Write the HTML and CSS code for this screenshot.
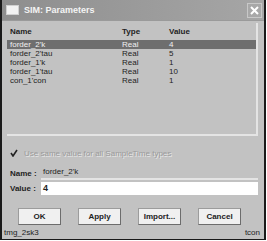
FILE: index.html
```html
<!DOCTYPE html>
<html lang="en">
<head>
  <meta charset="UTF-8" />
  <title>SIM: Parameters</title>
  <link rel="stylesheet" href="styles.css">
</head>
<body>
  <div class="window">
    <div class="titlebar">
      <span class="app-icon"></span>
      <span class="title">SIM: Parameters</span>
      <span class="close">
        <svg width="11" height="11" viewBox="0 0 11 11"><path d="M2 2 L9 9 M9 2 L2 9" stroke="#fff" stroke-width="2"/></svg>
      </span>
    </div>

    <div class="list">
      <div class="row head">
        <span class="c-name">Name</span><span class="c-type">Type</span><span class="c-val">Value</span>
      </div>
      <div class="row selected">
        <span class="c-name">forder_2'k</span><span class="c-type">Real</span><span class="c-val">4</span>
      </div>
      <div class="row">
        <span class="c-name">forder_2'tau</span><span class="c-type">Real</span><span class="c-val">5</span>
      </div>
      <div class="row">
        <span class="c-name">forder_1'k</span><span class="c-type">Real</span><span class="c-val">1</span>
      </div>
      <div class="row">
        <span class="c-name">forder_1'tau</span><span class="c-type">Real</span><span class="c-val">10</span>
      </div>
      <div class="row">
        <span class="c-name">con_1'con</span><span class="c-type">Real</span><span class="c-val">1</span>
      </div>
    </div>

    <div class="check">
      <span class="box">
        <svg width="8" height="8" viewBox="0 0 8 8"><path d="M1 4 L3 7 L7 1" stroke="#222" stroke-width="1.6" fill="none"/></svg>
      </span>
      <span class="check-label">Use same value for all SampleTime types</span>
    </div>

    <div class="fields">
      <div class="field">
        <span class="label">Name :</span>
        <span class="name-val">forder_2'k</span>
      </div>
      <div class="field">
        <span class="label">Value :</span>
        <span class="input">4</span>
      </div>
    </div>

    <div class="buttons">
      <button>OK</button>
      <button>Apply</button>
      <button>Import...</button>
      <button>Cancel</button>
    </div>

    <div class="status">
      <span>tmg_2sk3</span>
      <span>tcon</span>
    </div>
  </div>
</body>
</html>
```

FILE: styles.css
```css
body {
  margin: 0;
  background: #ffffff;
  font-family: "Liberation Sans", Arial, sans-serif;
  font-size: 8px;
  color: #222;
}

.window {
  width: 262px;
  height: 239px;
  background: #c2c2c2;
  border-left: 2px solid #1a1a1a;
  border-right: 2px solid #1a1a1a;
  border-bottom: 1px solid #1a1a1a;
  display: flex;
  flex-direction: column;
}

.titlebar {
  height: 20px;
  background: linear-gradient(to right, #8e8e8e, #a6a6a6);
  display: flex;
  align-items: center;
  padding: 0 2px 0 4px;
  border-bottom: 1px solid #9a9a9a;
}

.app-icon {
  width: 11px;
  height: 8px;
  background: #f2f2f2;
  border: 1px solid #d0d0d0;
  margin-right: 5px;
}

.title {
  flex: 1;
  color: #f4f4f4;
  font-weight: bold;
  font-size: 9px;
}

.close {
  width: 13px;
  height: 13px;
  background: #a8a8a8;
  border: 1px solid #c8c8c8;
  display: flex;
  align-items: center;
  justify-content: center;
}

.list {
  margin: 2px 6px 0 5px;
  height: 107px;
  border-right: 2px solid #e4e4e4;
  border-bottom: 2px solid #e4e4e4;
  padding-top: 4px;
}

.row {
  display: flex;
  height: 9px;
  line-height: 9px;
  padding-left: 3px;
}

.row.head {
  font-weight: bold;
  height: 10px;
  margin-bottom: 3px;
}

.row.selected {
  background: #6e6e6e;
  color: #f0f0f0;
}

.c-name {
  width: 112px;
}

.c-type {
  width: 47px;
}

.check {
  display: flex;
  align-items: center;
  margin: 12px 0 0 8px;
  height: 10px;
}

.box {
  width: 9px;
  height: 9px;
  display: flex;
  margin-right: 5px;
}

.check-label {
  color: #9a9a9a;
  text-shadow: 1px 1px 0 #e8e8e8;
}

.fields {
  margin: 8px 6px 0 5px;
}

.field {
  display: flex;
  align-items: center;
  height: 14px;
  margin-bottom: 1px;
}

.label {
  font-weight: bold;
  width: 31px;
  padding-left: 3px;
}

.name-val {
  flex: 1;
  padding-left: 2px;
  line-height: 12px;
  border-bottom: 2px solid #e4e4e4;
}

.input {
  flex: 1;
  height: 13px;
  line-height: 13px;
  background: #fff;
  padding-left: 2px;
  font-weight: bold;
  font-size: 9px;
}

.buttons {
  display: flex;
  gap: 17px;
  padding-left: 16px;
  margin-top: 12px;
}

button {
  width: 43px;
  height: 17px;
  padding: 0;
  background: #f0f0f0;
  border: 1px solid #9c9c9c;
  border-right-color: #6c6c6c;
  border-bottom-color: #6c6c6c;
  font-family: "Liberation Sans", Arial, sans-serif;
  font-size: 8px;
  font-weight: bold;
  color: #222;
}

.status {
  display: flex;
  justify-content: space-between;
  margin-top: auto;
  padding: 0 4px 1px 2px;
  height: 11px;
  line-height: 11px;
}
```
